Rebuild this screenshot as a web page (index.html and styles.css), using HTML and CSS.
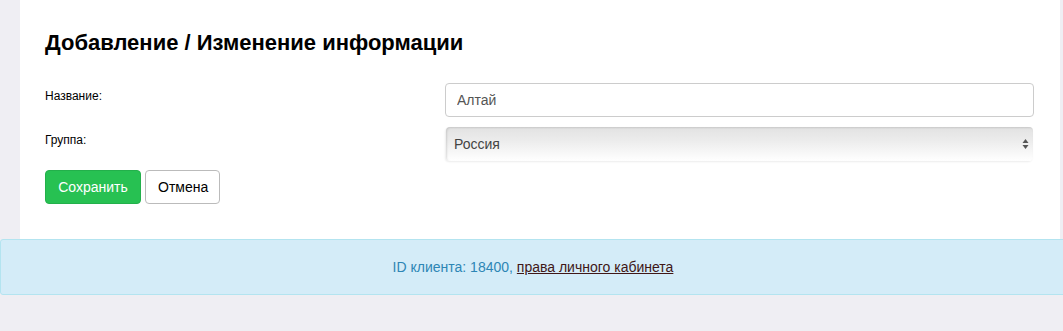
FILE: index.html
```html
<!DOCTYPE html>
<html lang="ru">
<head>
    <meta charset="UTF-8">
    <title>Добавление / Изменение информации</title>
    <link rel="stylesheet" href="styles.css">
</head>
<body>
    <div class="panel">
        <h2>Добавление / Изменение информации</h2>
        <form class="form">
            <div class="row">
                <label for="name">Название:</label>
                <input type="text" id="name" value="Алтай">
            </div>
            <div class="row">
                <label for="group">Группа:</label>
                <div class="select">
                    <span>Россия</span>
                    <svg width="7" height="12" viewBox="0 0 7 12">
                        <path d="M3.5 1 L6.5 5 L0.5 5 Z M3.5 11 L6.5 7 L0.5 7 Z" fill="#555"/>
                    </svg>
                </div>
            </div>
            <div class="buttons">
                <button type="button" class="btn btn-save">Сохранить</button>
                <button type="button" class="btn btn-cancel">Отмена</button>
            </div>
        </form>
    </div>

    <div class="alert">
        ID клиента: 18400, <a href="#">права личного кабинета</a>
    </div>
</body>
</html>
```

FILE: styles.css
```css
body {
    margin: 0;
    background: #efeef3;
    font-family: "Liberation Sans", Arial, sans-serif;
    color: #000;
}

.panel {
    background: #fff;
    margin: 0 3px 0 20px;
    padding: 29px 26px 19px 25px;
    height: 191px;
}

.panel h2 {
    margin: 0 0 27px;
    font-size: 22px;
    line-height: 27px;
    font-weight: bold;
}

.row {
    display: flex;
    align-items: center;
    margin-bottom: 10px;
}

.row label {
    width: 400px;
    font-size: 12px;
    position: relative;
    top: -4px;
}

.row input {
    flex: 1;
    box-sizing: border-box;
    height: 34px;
    border: 1px solid #ccc;
    border-radius: 4px;
    padding: 0 11px;
    font-family: inherit;
    font-size: 14px;
    color: #555;
}

.select {
    flex: 1;
    height: 34px;
    margin: 0 1px 0 1px;
    display: flex;
    align-items: center;
    justify-content: space-between;
    padding: 0 4px 0 8px;
    border-radius: 4px;
    background: linear-gradient(#e2e2e2, #ececec 40%, #fff);
    box-shadow: inset 1px 1px 2px rgba(0, 0, 0, 0.12), -1px 1px 2px rgba(0, 0, 0, 0.08);
    font-size: 14px;
    color: #444;
}

.buttons {
    display: flex;
    gap: 4px;
    margin-top: -1px;
}

.btn {
    height: 34px;
    border-radius: 4px;
    font-family: inherit;
    font-size: 14px;
    padding: 0 12px;
}

.btn-save {
    width: 96px;
    background: #27c152;
    border: 1px solid #23b04b;
    color: #fff;
}

.btn-cancel {
    width: 75px;
    background: #fff;
    border: 1px solid #bbb;
    color: #000;
}

.alert {
    background: #d4ecf8;
    border: 1px solid #b3e4f0;
    border-radius: 3px;
    margin: 0 -3px 0 0;
    height: 54px;
    line-height: 54px;
    text-align: center;
    font-size: 14px;
    color: #2d86b5;
}

.alert a {
    color: #401717;
}
```
